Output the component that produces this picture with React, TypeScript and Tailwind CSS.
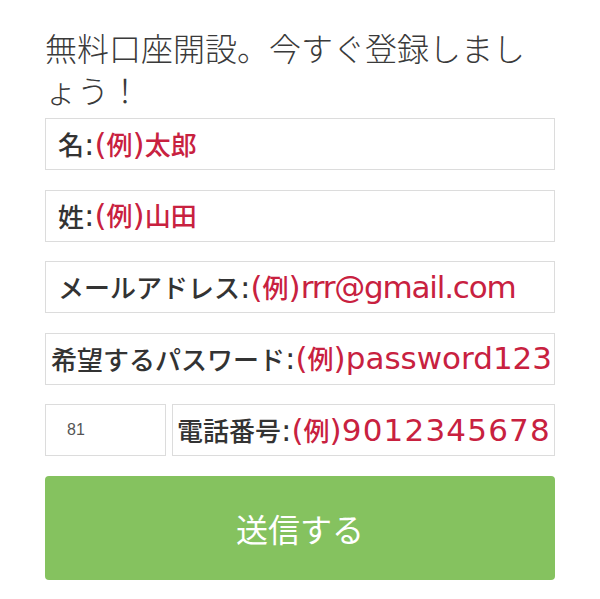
import React from 'react';

const cjk = "font-['Noto_Sans_CJK_JP',sans-serif] text-[26px] font-medium";
const latin = "font-['DejaVu_Sans',sans-serif] text-[31px]";

interface FieldProps {
  label: string;
  example: string;
  exampleIsLatin?: boolean;
  exampleClass?: string;
  className?: string;
}

const Field: React.FC<FieldProps> = ({ label, example, exampleIsLatin, exampleClass, className }) => (
  <div
    className={`h-[52px] border border-[#dcdcdc] bg-white flex items-center overflow-hidden whitespace-nowrap leading-none ${
      className || 'pl-3'
    }`}
  >
    <span className={`${cjk} text-[#333]`}>{label}</span>
    <span className={`${latin} text-[#333]`}>:</span>
    <span className="text-[#c8213f]">
      <span className={latin}>(</span>
      <span className={cjk}>例</span>
      <span className={latin}>)</span>
      <span className={`${exampleIsLatin ? latin : cjk} ${exampleClass || ''}`}>{example}</span>
    </span>
  </div>
);

export default function App() {
  return (
    <div className="w-[600px] h-[599px] bg-white px-[45px] pt-[26px]">
      <h1 className="font-['Noto_Sans_CJK_JP',sans-serif] text-[32px] leading-[42px] font-light text-[#3a3a3a] mb-[8px]">
        無料口座開設。今すぐ登録しましょう！
      </h1>
      <div className="flex flex-col gap-[19.5px]">
        <Field label="名" example="太郎" />
        <Field label="姓" example="山田" />
        <Field
          label="メールアドレス"
          example="rrr@gmail.com"
          exampleIsLatin
          exampleClass="tracking-[-1.2px]"
        />
        <Field label="希望するパスワード" example="password123" exampleIsLatin className="pl-[5px]" />
        <div className="flex gap-[6px]">
          <div className="w-[121px] h-[52px] border border-[#dcdcdc] flex items-center pl-[21px] font-['Liberation_Sans',sans-serif] text-[16px] text-[#555]">
            81
          </div>
          <div className="flex-1 min-w-0">
            <Field
              label="電話番号"
              example="9012345678"
              exampleIsLatin
              exampleClass="tracking-[1.2px]"
              className="pl-[4px]"
            />
          </div>
        </div>
        <button className="h-[104px] w-full rounded-[4px] bg-[#85c25f] text-white font-['Noto_Sans_CJK_JP',sans-serif] text-[32px] font-normal">
          送信する
        </button>
      </div>
    </div>
  );
}
